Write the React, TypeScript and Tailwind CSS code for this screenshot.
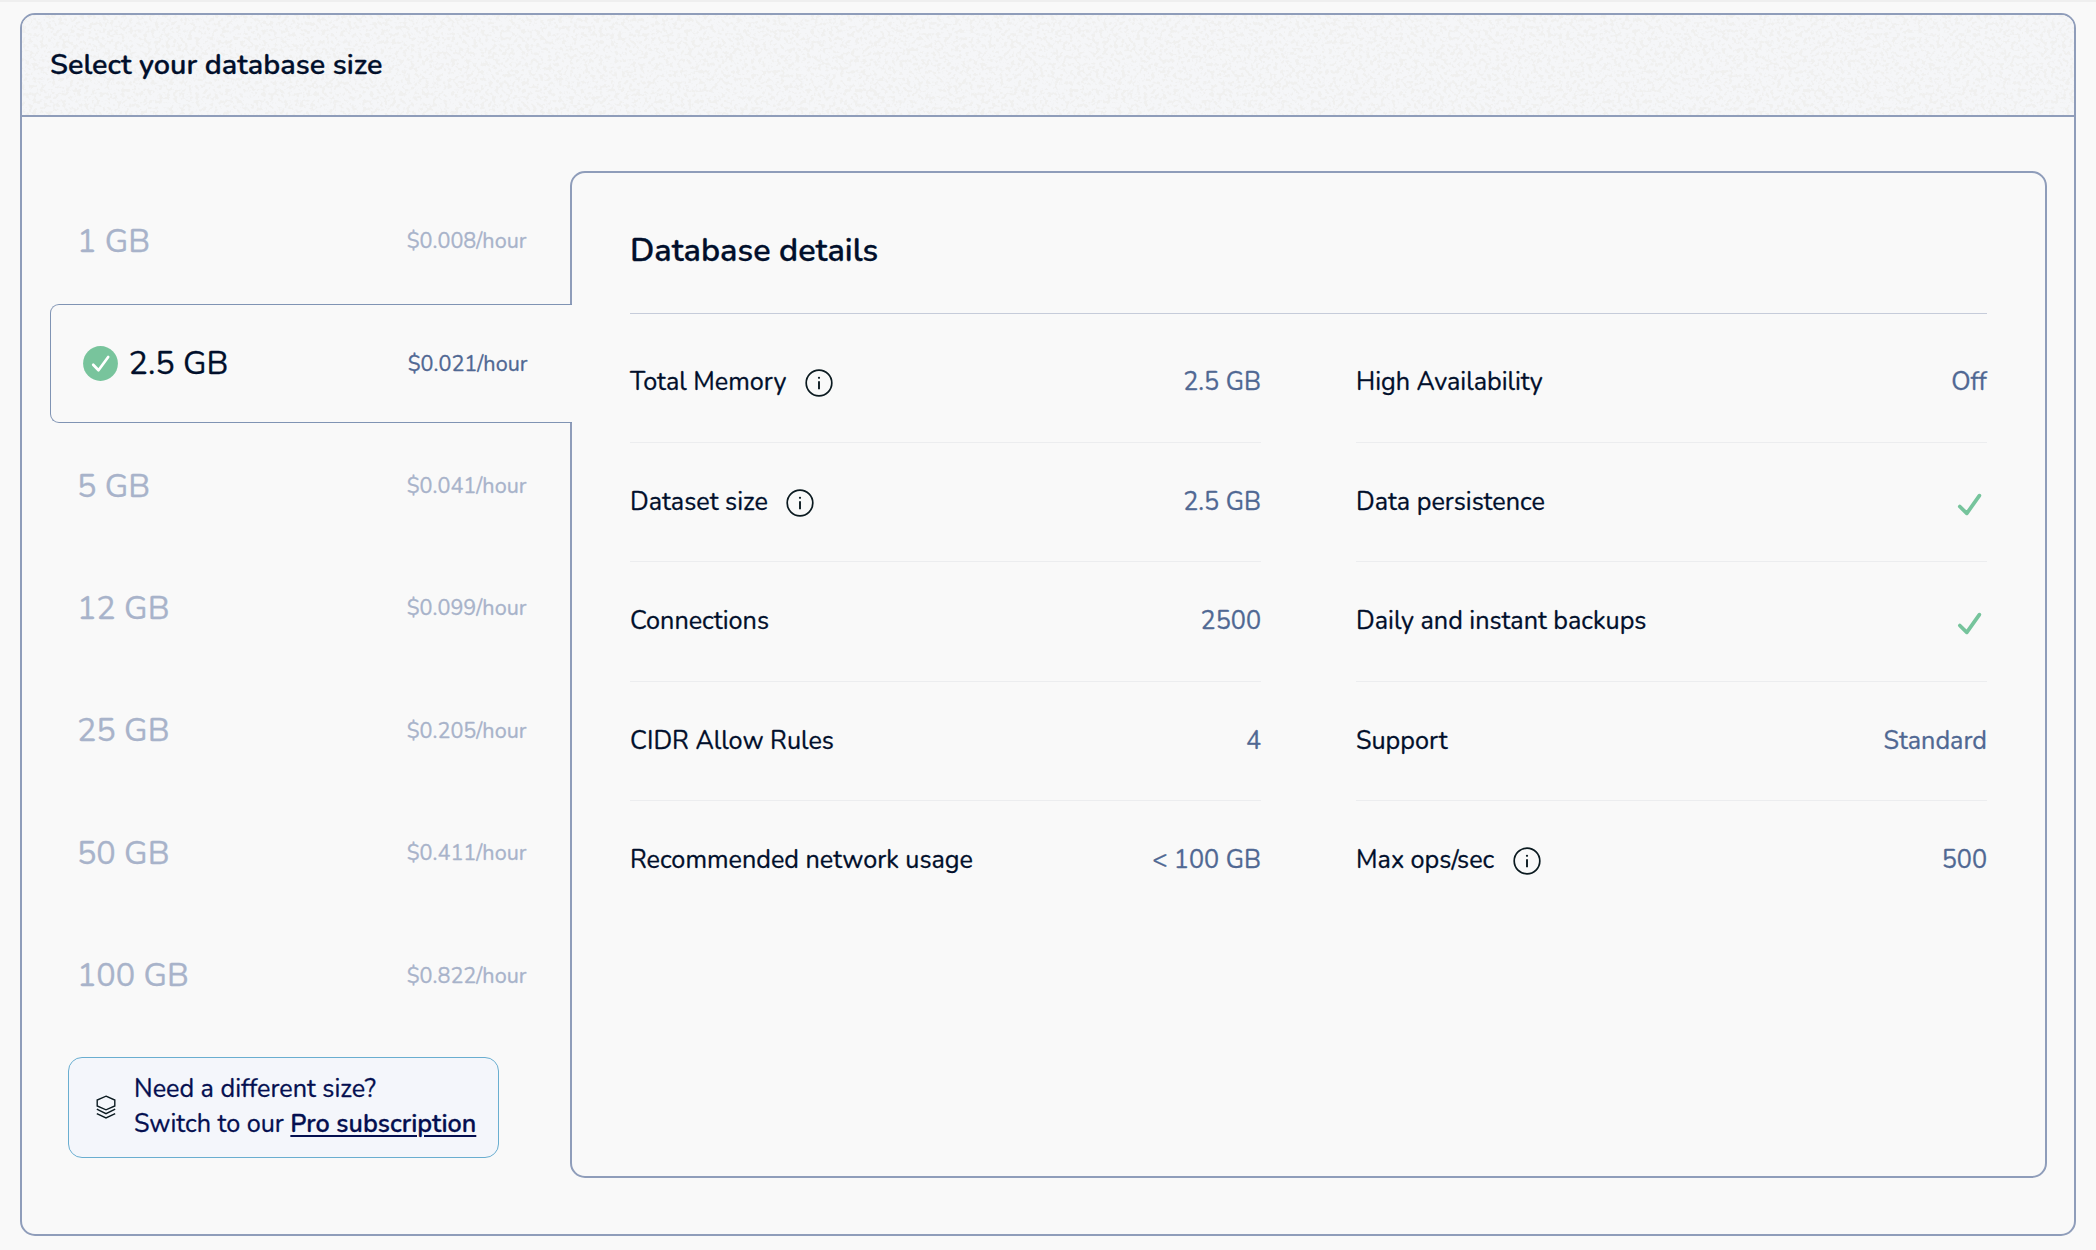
import React from "react";

type Plan = { size: string; price: string; selected?: boolean };
type Detail = { label: string; value?: string; info?: boolean };

const plans: Plan[] = [
  { size: "1 GB", price: "$0.008/hour" },
  { size: "2.5 GB", price: "$0.021/hour", selected: true },
  { size: "5 GB", price: "$0.041/hour" },
  { size: "12 GB", price: "$0.099/hour" },
  { size: "25 GB", price: "$0.205/hour" },
  { size: "50 GB", price: "$0.411/hour" },
  { size: "100 GB", price: "$0.822/hour" },
];

const leftDetails: Detail[] = [
  { label: "Total Memory", value: "2.5 GB", info: true },
  { label: "Dataset size", value: "2.5 GB", info: true },
  { label: "Connections", value: "2500" },
  { label: "CIDR Allow Rules", value: "4" },
  { label: "Recommended network usage", value: "< 100 GB" },
];

// A row without a value shows a check mark.
const rightDetails: Detail[] = [
  { label: "High Availability", value: "Off" },
  { label: "Data persistence" },
  { label: "Daily and instant backups" },
  { label: "Support", value: "Standard" },
  { label: "Max ops/sec", value: "500", info: true },
];

function InfoIcon() {
  return (
    <svg className="relative top-[0.5px] ml-[18.4px] size-[28px]" viewBox="0 0 28 28" fill="none">
      <circle cx="14" cy="14" r="12.8" stroke="#0b1a20" strokeWidth="1.7" />
      <path d="M14 12.2v8" stroke="#0b1a20" strokeWidth="1.9" />
      <circle cx="14" cy="8.8" r="1.1" fill="#0b1a20" />
    </svg>
  );
}

function CheckIcon() {
  return (
    <svg className="relative top-[2.5px] mr-[4px] h-[24px] w-[26px]" viewBox="0 0 26 24" fill="none">
      <path
        d="M2.8 13.5 9.8 20.4 22.4 2.6"
        stroke="#76c49c"
        strokeWidth="3.7"
        strokeLinecap="round"
        strokeLinejoin="round"
      />
    </svg>
  );
}

function SelectedIcon() {
  return (
    <svg className="mr-[10.9px] ml-[0.6px] size-[35px]" viewBox="0 0 35 35" fill="none">
      <circle cx="17.5" cy="17.5" r="17.4" fill="#78c49c" />
      <path
        d="M10.2 18.7 15.5 24.2 25.2 11"
        stroke="#fff"
        strokeWidth="2.7"
        strokeLinecap="round"
        strokeLinejoin="round"
      />
    </svg>
  );
}

function LayersIcon() {
  return (
    <svg className="h-[24px] w-[20px]" viewBox="0 0 20 24" fill="none" stroke="#0b1a20" strokeWidth="1.4">
      <path d="M10 1.2 18.8 5v6L10 14.8 1.2 11V5Z" />
      <path d="M.8 14.2 10 18.6l9.2-4.4" />
      <path d="M.8 18.6 10 23l9.2-4.4" />
    </svg>
  );
}

function HeaderTexture() {
  return (
    <svg className="absolute inset-0 size-full">
      <filter id="grain" x="0" y="0" width="100%" height="100%" colorInterpolationFilters="sRGB">
        <feTurbulence type="fractalNoise" baseFrequency="0.27" numOctaves="2" seed="7" />
        <feColorMatrix values="0 0 0 0 0.937  0 0 0 0 0.937  0 0 0 0 0.935  9 0 0 0 -4.6" />
      </filter>
      <rect width="100%" height="100%" filter="url(#grain)" opacity="0.85" />
    </svg>
  );
}

function PlanTab({ plan }: { plan: Plan }) {
  if (plan.selected) {
    return (
      <button className="relative z-10 -mr-[2px] flex h-[119px] items-center justify-between rounded-l-[9px] border border-r-0 border-[#8094b4] bg-[#f9f9f9] pr-[44.5px] pl-[31px]">
        <span className="flex items-center text-[32.4px] text-[#010f2b]">
          <SelectedIcon />
          {plan.size}
        </span>
        <span className="pt-[2px] text-[21.6px] text-[#506893]">{plan.price}</span>
      </button>
    );
  }
  return (
    <button className="flex h-[119px] items-center justify-between pr-[43.5px] pl-[26.9px]">
      <span className="text-[32.4px] text-[#a8b3ca]">{plan.size}</span>
      <span className="pt-[2px] text-[21.6px] text-[#a8b3ca]">{plan.price}</span>
    </button>
  );
}

function DetailColumn({ rows }: { rows: Detail[] }) {
  return (
    <div className="flex w-[631px] flex-col">
      {rows.map((row) => (
        <div
          key={row.label}
          className="flex h-[119.5px] items-center justify-between border-b border-[#ecedef] pt-[1px] text-[25.2px] last:border-transparent"
        >
          <span className="flex items-center text-[#010f2b]">
            {row.label}
            {row.info && <InfoIcon />}
          </span>
          {row.value ? <span className="text-[#506893]">{row.value}</span> : <CheckIcon />}
        </div>
      ))}
    </div>
  );
}

export default function App() {
  return (
    <div className="h-[1250px] w-[2096px] border-t-2 border-[#efefef] bg-[#f9f9f9] pt-[11px] pl-[20px] font-['Nunito',Lato,sans-serif] leading-none [-webkit-text-stroke:0.3px]">
      <section className="flex h-[1223px] w-[2056px] flex-col overflow-hidden rounded-[15px] border-2 border-[#8f9dba]">
        <header className="relative flex h-[102px] shrink-0 items-center border-b-2 border-[#8f9dba] bg-[#f5f6f8] pl-[28px]">
          <HeaderTexture />
          <h1 className="relative text-[28.8px] font-semibold text-[#010f2b]">Select your database size</h1>
        </header>
        <div className="flex flex-1 items-start pt-[54px] pl-[28px]">
          <div className="flex w-[520px] shrink-0 flex-col pt-[10.6px]">
            <div className="flex flex-col gap-[3.4px]">
              {plans.map((plan) => (
                <PlanTab key={plan.size} plan={plan} />
              ))}
            </div>
            <div className="mt-[22px] ml-[18px] flex h-[101px] w-[431px] items-center rounded-[14px] border border-[#6aaed0] bg-[#f4f6fb] pl-[26.5px]">
              <LayersIcon />
              <p className="ml-[18.5px] text-[25.2px] leading-[35px] whitespace-nowrap text-[#040f50]">
                Need a different size?
                <br />
                Switch to our{" "}
                <a className="font-semibold underline decoration-2 underline-offset-[3px]">Pro subscription</a>
              </p>
            </div>
          </div>
          <div className="h-[1007px] w-[1477px] shrink-0 rounded-[15px] border-2 border-[#8f9dba] px-[58px]">
            <h2 className="flex h-[141px] items-center border-b border-[#c6ccda] pt-[15px] text-[32.4px] font-semibold text-[#010f2b]">
              Database details
            </h2>
            <div className="flex justify-between pt-[9px]">
              <DetailColumn rows={leftDetails} />
              <DetailColumn rows={rightDetails} />
            </div>
          </div>
        </div>
      </section>
    </div>
  );
}
